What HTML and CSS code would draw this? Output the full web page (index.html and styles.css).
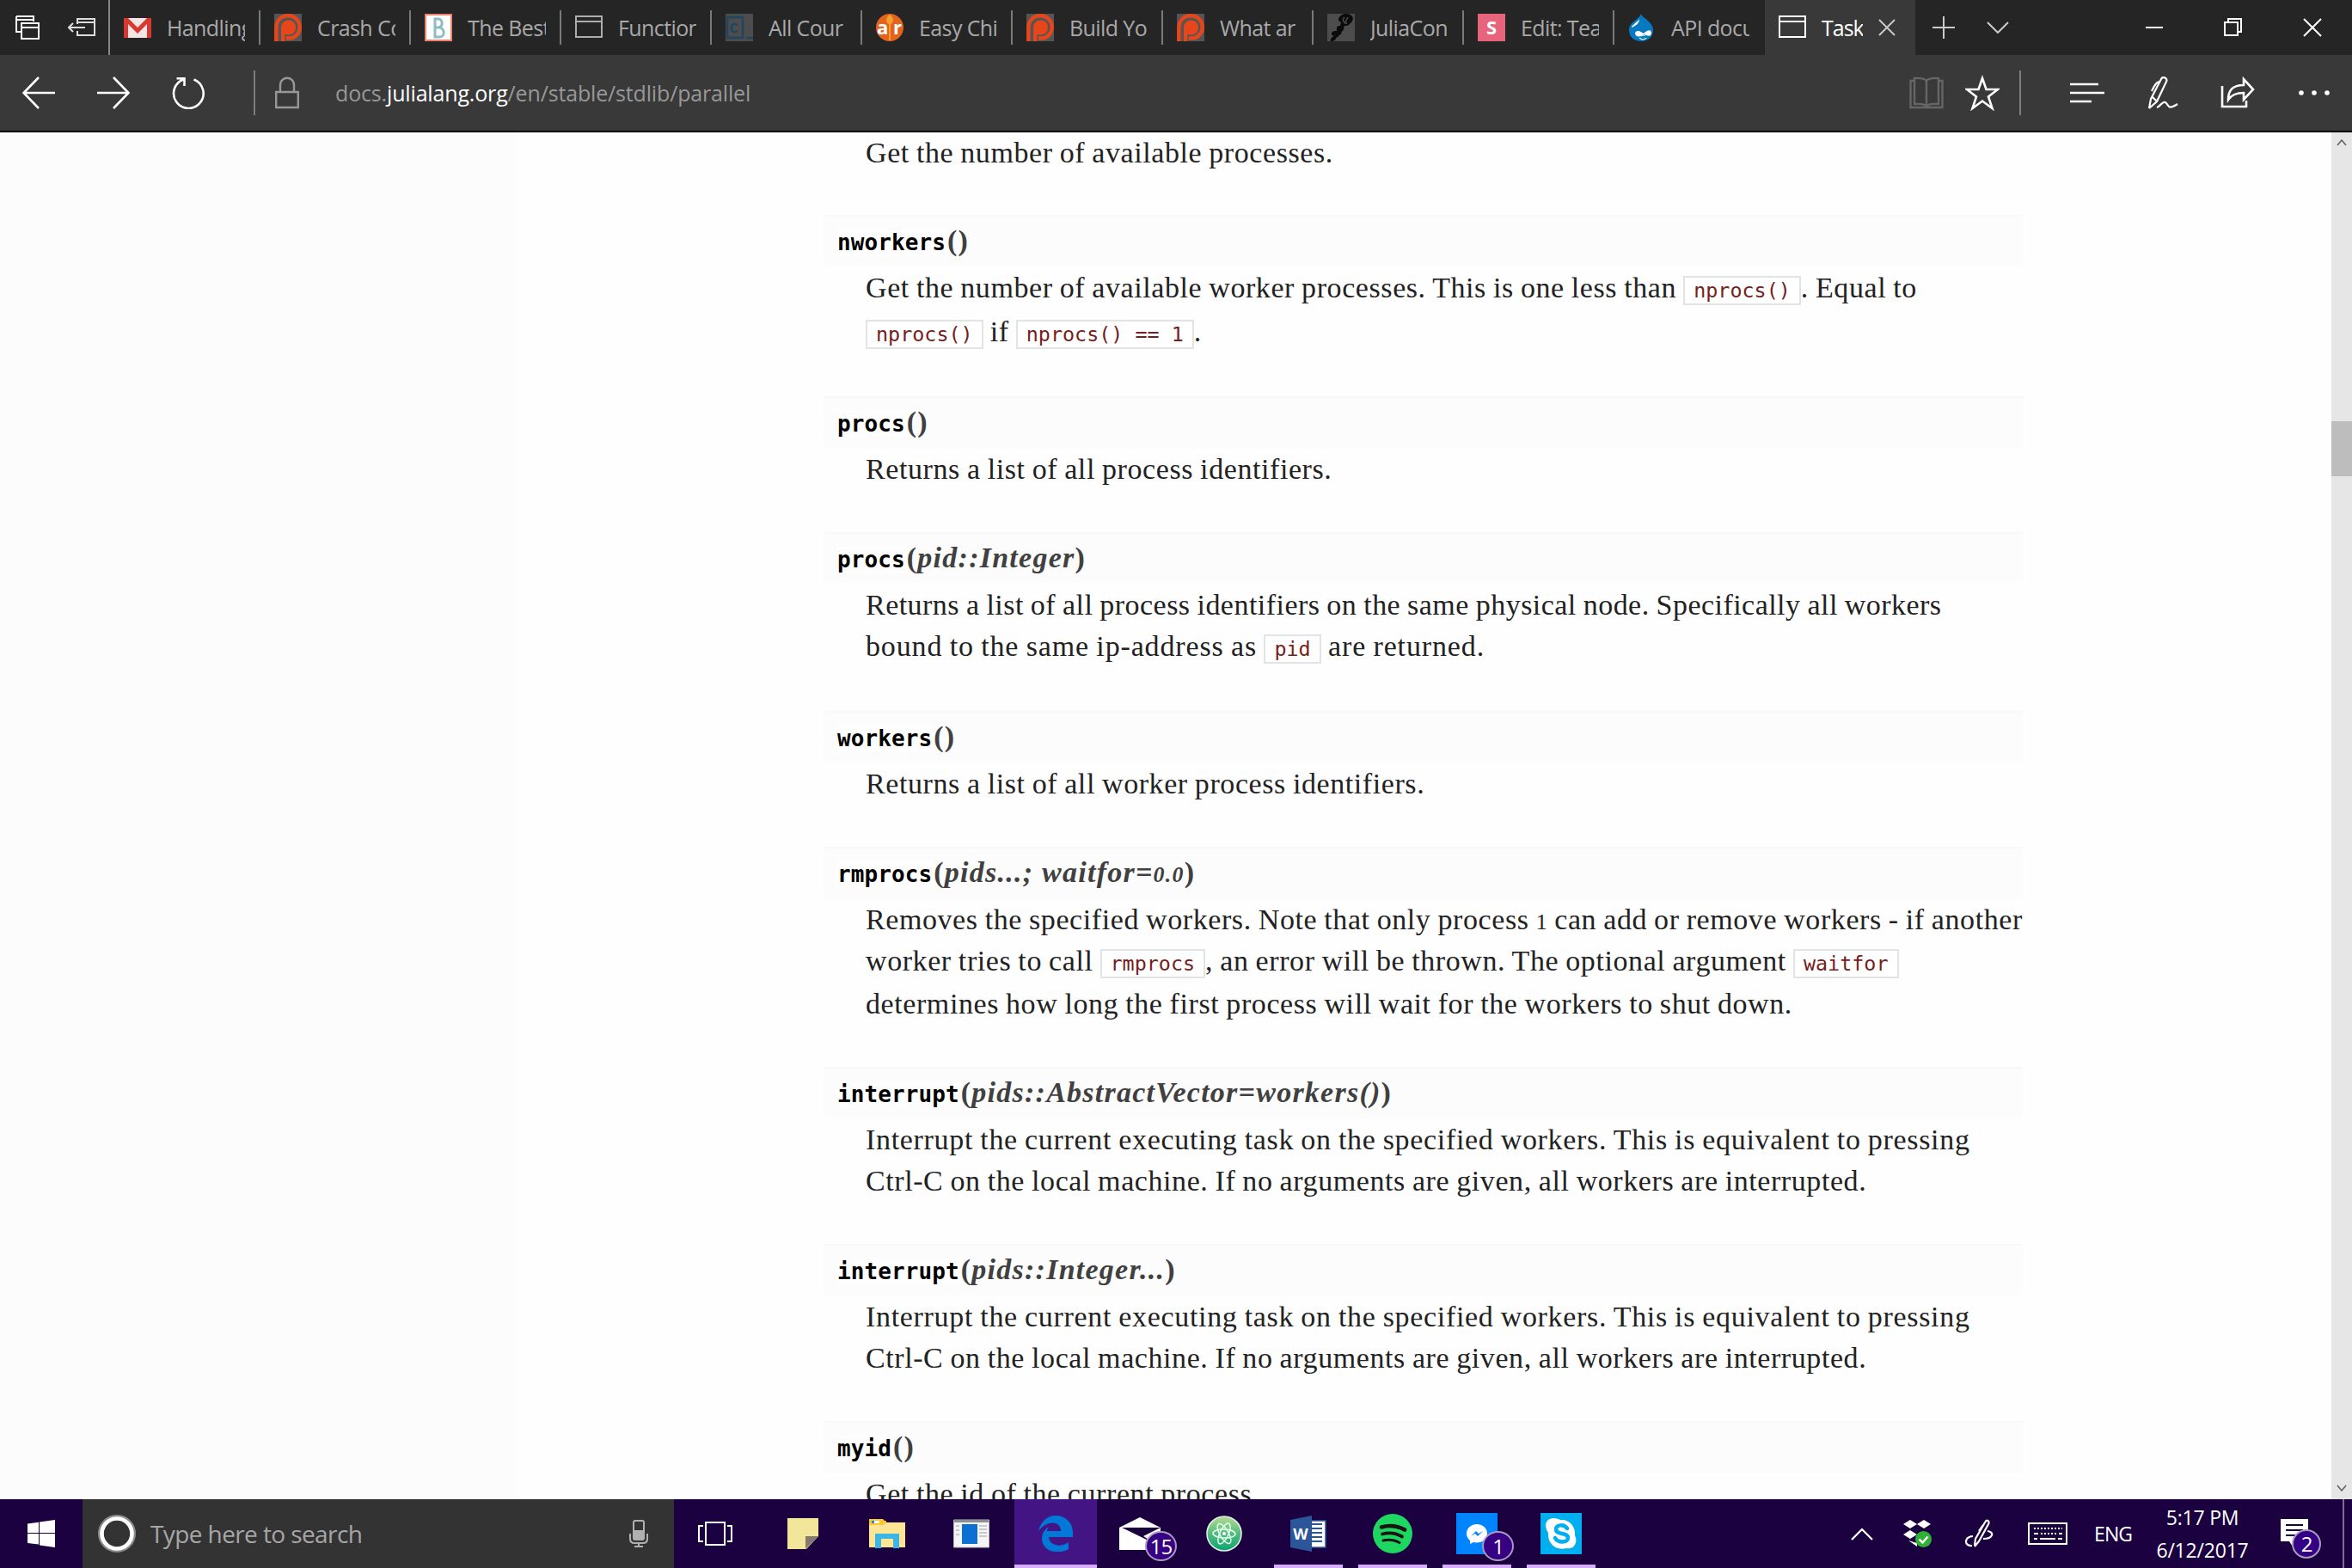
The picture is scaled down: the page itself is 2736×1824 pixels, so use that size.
FILE: index.html
```html
<!DOCTYPE html>
<html lang="en">
<head>
<meta charset="utf-8">
<title>Tasks and Parallel Computing</title>
<link rel="stylesheet" href="styles.css">
</head>
<body>
<svg width="0" height="0" class="defs"><symbol id="patreon" viewBox="0 0 32 32"><path fill="#555" d="M0 0h32v32H0z"/><path fill="none" stroke="#e6461a" stroke-width="4.500" d="M2.300 32V16.500C2.300 8 8 2.300 16 2.300S29.700 8 29.700 15.500 24 28.500 17 28.500h-3"/><path fill="#e6461a" d="M8 32V16.500C8 11 11.500 7.500 16.500 7.500S25 11 25 16s-3.500 8.500-8.500 8.500c-1.500 0-3-.300-4-1V32z"/></symbol></svg>
<div class="screen">
  <header class="tabbar">
    <div class="tab-tools">
      <svg width="28" height="28" viewBox="0 0 28 28" fill="none" stroke="#fff" stroke-width="2"><path d="M1 1h20v6M1 1v18h6M1 5h20M7 9h20v18H7zM7 14h20"/></svg>
      <svg width="32" height="22" viewBox="0 0 32 22" fill="none" stroke="#ddd" stroke-width="2"><path d="M11 7V1h20v19H11v-5M11 5h20M1 11h19M6 6l-5 5 5 5"/></svg>
    </div>
    <div class="tab"><svg width="32" height="32" viewBox="0 0 32 32"><path fill="#f4e6e5" d="M0 5h32v23H0z"/><path fill="#d93831" d="M0 28V5h5l11 11L27 5h5v23h-5V12L16 23 5 12v16z"/></svg><span class="t">Handling</span></div>
    <div class="tab"><svg width="32" height="32" viewBox="0 0 32 32"><use href="#patreon"/></svg><span class="t">Crash Co</span></div>
    <div class="tab"><svg width="32" height="32" viewBox="0 0 32 32"><path fill="#fff" stroke="#f28370" stroke-width="2" d="M1 1h30v30H1z"/><path fill="none" stroke="#8fbcc4" stroke-width="3" d="M12 6v21h5c7 0 7-10 0-11h-4 3c6-1 5-10 0-10z"/></svg><span class="t">The Best</span></div>
    <div class="tab"><svg width="32" height="32" viewBox="0 0 32 32"><path fill="none" stroke="#adadad" stroke-width="2" d="M1 3h30v24H1zM1 9h30"/></svg><span class="t">Function</span></div>
    <div class="tab"><svg width="32" height="32" viewBox="0 0 32 32"><path fill="#4d4d4d" d="M0 0h32v32H0z"/><path fill="none" stroke="#1f4560" stroke-width="2.500" d="M2 4h18v24H2zM24 28h8M14 13c-6-3-7 1-7 4s2 6 7 3"/></svg><span class="t">All Cour</span></div>
    <div class="tab"><svg width="32" height="32" viewBox="0 0 32 32"><circle cx="16" cy="16" r="16" fill="#e2641f"/><path fill="#f2a12c" d="M16 1c-6 4-4 10-1 11v19h2V12c3-1 5-7-1-11z"/><text class="fav-ar" x="1" y="24">a</text><text class="fav-ar" x="20" y="24">r</text></svg><span class="t">Easy Chi</span></div>
    <div class="tab"><svg width="32" height="32" viewBox="0 0 32 32"><use href="#patreon"/></svg><span class="t">Build Yo</span></div>
    <div class="tab"><svg width="32" height="32" viewBox="0 0 32 32"><use href="#patreon"/></svg><span class="t">What ar</span></div>
    <div class="tab"><svg width="32" height="32" viewBox="0 0 32 32"><path fill="#4d4d4d" d="M0 0h32v32H0z"/><path fill="#0b0b0b" d="M14 4c3-5 11-5 14-2 4 3 1 7-2 10-3 3-5 1-7 3 2 3-3 5-3 9-3 0-2 3-6 4 0 3-3 4-6 4-1-2 1-5 4-6-5-1-4-7 3-6 0-3-1-6 4-6l1-4c-3-1-4-4-2-6z"/><path fill="none" stroke="#4d4d4d" stroke-width="1.500" d="M20 4c-3 3-1 8 3 7M24 4l-3 6"/></svg><span class="t">JuliaCon</span></div>
    <div class="tab"><svg width="32" height="32" viewBox="0 0 32 32"><path fill="#e8637c" d="M0 0h32v32H0z"/><text class="fav-ar" x="16" y="24" text-anchor="middle">S</text></svg><span class="t">Edit: Tea</span></div>
    <div class="tab last"><svg width="32" height="32" viewBox="0 0 32 32"><path fill="#0779bf" d="M15 0c1 5 14 9 14 19 0 8-6 13-14 13S1 27 1 19C1 9 12 8 15 0z"/><path fill="#fff" d="M13 6C11 10 5 12 4 16c5-2 9-5 9-10zM8 22c3-4 7-1 10 1 3-3 8-6 9-1 0 5-4 4-8 2-4 3-11 4-11-2z"/><path fill="none" stroke="#cfe6f5" stroke-width="1.500" d="M13 28c3 3 7 2 8 0M15 26c2-2 4-1 4 0"/></svg><span class="t">API docu</span></div>
    <div class="tab active"><svg width="32" height="32" viewBox="0 0 32 32"><path fill="none" stroke="#fff" stroke-width="2" d="M1 3h30v24H1zM1 9h30"/></svg><span class="t">Task</span><svg class="tab-x" width="20" height="20" viewBox="0 0 20 20"><path fill="none" stroke="#ccc" stroke-width="1.800" d="M1 1l18 18M19 1L1 19"/></svg></div>
    <div class="newtab">
      <svg width="28" height="28" viewBox="0 0 28 28" fill="none" stroke="#ccc" stroke-width="2"><path d="M14 1v26M1 14h26"/></svg>
      <svg width="26" height="14" viewBox="0 0 26 14" fill="none" stroke="#ccc" stroke-width="2"><path d="M1 1l12 12L25 1"/></svg>
    </div>
    <div class="winbtns">
      <svg width="22" height="22" viewBox="0 0 22 22" fill="none" stroke="#fff" stroke-width="2"><path d="M1 11h20"/></svg>
      <svg width="22" height="22" viewBox="0 0 22 22" fill="none" stroke="#fff" stroke-width="2"><path d="M1 5h15v15H1zM5 5V1h15v15h-4"/></svg>
      <svg width="22" height="22" viewBox="0 0 22 22" fill="none" stroke="#fff" stroke-width="2"><path d="M1 1l20 20M21 1L1 21"/></svg>
    </div>
  </header>

  <nav class="toolbar">
    <div class="nav-left">
      <svg width="38" height="38" viewBox="0 0 38 38" fill="none" stroke="#fff" stroke-width="2.600"><path d="M1 19h37M19 1L1.500 19 19 37"/></svg>
      <svg width="38" height="38" viewBox="0 0 38 38" fill="none" stroke="#fff" stroke-width="2.600"><path d="M0 19h37M19 1l17.500 18L19 37"/></svg>
      <svg width="38" height="38" viewBox="0 0 38 38" fill="none" stroke="#fff" stroke-width="2.600"><path d="M14 3.200A17.300 17.300 0 1 0 25.500 3.500M5.500 2.300h9v8.700"/></svg>
    </div>
    <i class="rule"></i>
    <svg class="lock" width="28" height="38" viewBox="0 0 28 38" fill="none" stroke="#989898" stroke-width="2.400"><path d="M1.200 18h25.600v18H1.200zM6 18V10c0-11 16-11 16 0v8"/></svg>
    <div class="url">docs.<b>julialang.org</b>/en/stable/stdlib/parallel</div>
    <div class="nav-right">
      <svg width="40" height="38" viewBox="0 0 40 38" fill="none" stroke="#666" stroke-width="2.400"><path d="M20 4v30M20 5c-3-4-10-3-14-3v30c6 0 11-1 14 3 3-4 8-3 14-3V2c-4 0-11-1-14 3M6 5H1.500v31h37V5H34"/></svg>
      <svg class="star" width="40" height="42" viewBox="0 0 40 42" fill="none" stroke="#fff" stroke-width="2.600"><path d="M20 4l4.500 13H38L27 25.500 31.500 39 20 30.500 8.500 39 13 25.500 2 17h13.500z"/></svg>
      <i class="rule"></i>
      <svg class="hub" width="40" height="24" viewBox="0 0 40 24" fill="none" stroke="#fff" stroke-width="2.600"><path d="M0 2h33M0 12h40M0 22h25"/></svg>
      <svg class="ink" width="36" height="38" viewBox="0 0 36 38" fill="none" stroke="#fff" stroke-width="2.200"><path d="M1 37l2-11L15 3c2-4 8-1 6 3L10 29 1 37M5 24l4 4M13 6c-3 0-5 3-9 11M10 36c4-1 7-9 11-5 3 3 2 8 13 1"/></svg>
      <svg class="share" width="40" height="38" viewBox="0 0 40 38" fill="none" stroke="#fff" stroke-width="2.600"><path d="M2 11v24h28V28M9 27c0-11 5-17 18-17V3l11 12-11 12v-8c-9 0-14 2-18 8z"/></svg>
      <svg class="dots" width="38" height="8" viewBox="0 0 38 8" fill="#fff"><circle cx="4" cy="4" r="2.800"/><circle cx="19" cy="4" r="2.800"/><circle cx="34" cy="4" r="2.800"/></svg>
    </div>
  </nav>

  <main class="viewport">
    <aside class="side"></aside>
    <article class="doc">
      <section class="entry first">
        <p class="line">Get the number of available processes.</p>
      </section>
      <section class="entry h211">
        <h3><code>nworkers</code>()</h3>
        <p class="line">Get the number of available worker processes. This is one less than <code>nprocs()</code>. Equal to</p>
        <p class="line tall"><code>nprocs()</code> if <code>nprocs() == 1</code>.</p>
      </section>
      <section class="entry h158">
        <h3><code>procs</code>()</h3>
        <p class="line">Returns a list of all process identifiers.</p>
      </section>
      <section class="entry h208">
        <h3><code>procs</code>(<em>pid::Integer</em>)</h3>
        <p class="line snug">Returns a list of all process identifiers on the same physical node. Specifically all workers</p>
        <p class="line open">bound to the same ip-address as <code>pid</code> are returned.</p>
      </section>
      <section class="entry h158">
        <h3><code>workers</code>()</h3>
        <p class="line">Returns a list of all worker process identifiers.</p>
      </section>
      <section class="entry h256">
        <h3><code>rmprocs</code>(<em>pids...; waitfor=<span class="osf">0.0</span></em>)</h3>
        <p class="line">Removes the specified workers. Note that only process <span class="osf">1</span> can add or remove workers - if another</p>
        <p class="line">worker tries to call <code>rmprocs</code>, an error will be thrown. The optional argument <code>waitfor</code></p>
        <p class="line l50">determines how long the first process will wait for the workers to shut down.</p>
      </section>
      <section class="entry">
        <h3><code>interrupt</code>(<em>pids::AbstractVector=workers()</em>)</h3>
        <p class="line loose">Interrupt the current executing task on the specified workers. This is equivalent to pressing</p>
        <p class="line">Ctrl-C on the local machine. If no arguments are given, all workers are interrupted.</p>
      </section>
      <section class="entry">
        <h3><code>interrupt</code>(<em>pids::Integer...</em>)</h3>
        <p class="line loose">Interrupt the current executing task on the specified workers. This is equivalent to pressing</p>
        <p class="line">Ctrl-C on the local machine. If no arguments are given, all workers are interrupted.</p>
      </section>
      <section class="entry">
        <h3><code>myid</code>()</h3>
        <p class="line">Get the id of the current process.</p>
      </section>
    </article>
    <div class="scroll">
      <svg width="12" height="8" viewBox="0 0 12 8" fill="none" stroke="#606060" stroke-width="1.500"><path d="M1 7l5-6 5 6"/></svg>
      <i class="thumb"></i>
      <svg width="12" height="8" viewBox="0 0 12 8" fill="none" stroke="#606060" stroke-width="1.500"><path d="M1 1l5 6 5-6"/></svg>
    </div>
  </main>

  <footer class="taskbar">
    <div class="start"><svg width="32" height="32" viewBox="0 0 32 32" fill="#fff"><path d="M0 4.500L13 2.700V15H0zM14 2.500L32 0v15H14zM0 16h13v12.500L0 27zM14 16h18v16l-18-2.500z"/></svg></div>
    <div class="search">
      <svg width="44" height="44" viewBox="0 0 44 44" fill="none"><circle cx="22" cy="22" r="20.500" stroke="#8a8a8a" stroke-width="3"/><circle cx="22" cy="22" r="17.500" stroke="#fff" stroke-width="4.600"/></svg>
      <span class="hint">Type here to search</span>
      <svg width="22" height="32" viewBox="0 0 22 32" fill="none" stroke="#b0b0b0" stroke-width="2"><rect x="5" y="1" width="12" height="22" rx="2"/><path fill="#b0b0b0" d="M5 13h12v8l-2 2H7l-2-2z"/><path d="M1 16v6c0 3 2 5 5 5h10c3 0 5-2 5-5v-6M11 27v4M6 31h10"/></svg>
    </div>
    <div class="apps">
      <div class="app view"><svg width="40" height="28" viewBox="0 0 40 28" fill="none" stroke="#fff" stroke-width="2"><path d="M9 1h22v26H9zM6 5H1v18h5M34 5h5v18h-5"/></svg></div>
      <div class="app"><svg width="36" height="36" viewBox="0 0 36 36"><path fill="#f1e699" d="M0 0h36v21L22 36H0z"/><path fill="#87786f" d="M36 21H21v15z"/></svg></div>
      <div class="app"><svg width="42" height="36" viewBox="0 0 42 36"><path fill="#e8b339" d="M0 3h20v6H0z"/><path fill="#ffe694" d="M0 5h42v29H0z"/><path fill="#fdc52f" d="M0 1h16l4 4-4 3H0z"/><path fill="#fff" d="M3 3h9v3H3z"/><path fill="#2c8ed8" d="M3 3h3v3H3z"/><path fill="#3db5e6" d="M7 18h28v17h-7V24H14v11H7z"/></svg></div>
      <div class="app"><svg width="42" height="34" viewBox="0 0 42 34"><path fill="#f5f5f5" stroke="#b8b8b8" stroke-width="1" d="M.5 1h41v32H.5z"/><path fill="#8a8f94" d="M1 1h40v3H1z"/><path fill="#0b6fd4" d="M10 6h18v23H10z"/><path stroke="#bbb" stroke-width="1.500" d="M3 8h4M3 13h4M3 18h4M30 8h9M30 12h9M30 16h9M30 20h9"/></svg></div>
      <div class="app on focus"><svg width="40" height="42" viewBox="0 0 40 42"><path fill="#0078d7" d="M0 18C3 6 11 0 20 0c13 0 20 10 20 20v5H12c1 11 15 12 23 6v8c-12 7-30 3-31-11-.500-7 3-12 8-15-2 3-2 4-2 5h16C26 6 10 5 0 18z"/></svg></div>
      <div class="app"><svg width="48" height="38" viewBox="0 0 48 38"><path fill="#fff" d="M0 12L24 0l24 12v26H0z"/><path fill="#1b0140" d="M3 12h45L28 22l14 9z"/></svg><span class="badge">15</span></div>
      <div class="app"><svg width="44" height="44" viewBox="0 0 44 44"><defs><linearGradient id="ag" x2="0" y2="1"><stop offset="0" stop-color="#b5dc93"/><stop offset=".5" stop-color="#55bb7e"/><stop offset="1" stop-color="#0aa571"/></linearGradient></defs><circle cx="22" cy="22" r="20" fill="url(#ag)" stroke="#e3efe6" stroke-width="1.600"/><g fill="none" stroke="#e8fff2" stroke-width="1.500"><ellipse cx="22" cy="22" rx="5" ry="13" transform="rotate(25 22 22)"/><ellipse cx="22" cy="22" rx="5" ry="13" transform="rotate(-30 22 22)"/><ellipse cx="22" cy="22" rx="5" ry="13" transform="rotate(92 22 22)"/></g><circle cx="22" cy="22" r="2" fill="#fff"/></svg></div>
      <div class="app on"><svg width="42" height="42" viewBox="0 0 42 42"><path fill="#fff" stroke="#2b579a" stroke-width="1.500" d="M22 6h19v31H22z"/><path stroke="#2b579a" stroke-width="2" d="M24 10h13M24 15h13M24 20h13M24 25h13M24 30h13"/><path fill="#2b579a" d="M0 5l25-5v42L0 37z"/><text class="word-w" x="12" y="28" text-anchor="middle">W</text></svg></div>
      <div class="app on"><svg width="46" height="46" viewBox="0 0 46 46"><circle cx="23" cy="23" r="23" fill="#1ed760"/><g fill="none" stroke="#191414" stroke-linecap="round"><path stroke-width="4.600" d="M10 15.500c9-2.500 19-1.500 27 3"/><path stroke-width="3.800" d="M11 23.500c8-2 16-1 23 3"/><path stroke-width="3" d="M12 31c7-1.500 13-.800 19 2.500"/></g></svg></div>
      <div class="app on"><svg width="48" height="48" viewBox="0 0 48 48"><path fill="#0084ff" d="M0 0h48v48H0z"/><path fill="#fff" d="M24 13c-7 0-12 5-12 11 0 4 2 6 4 8v4l4-2c9 2 16-3 16-10 0-6-5-11-12-11z"/><path fill="#0084ff" d="M17 27l6-6 3 3 5-3-6 6-3-3z"/></svg><span class="badge">1</span></div>
      <div class="app on"><svg width="48" height="48" viewBox="0 0 48 48"><path fill="#00aff0" d="M0 0h48v48H0z"/><path fill="#fff" d="M15 6c4 0 6 1 8 2 10-1 18 7 17 18 4 8-1 17-10 15-12 3-22-5-21-18C3 14 7 6 15 6z"/><path fill="none" stroke="#00aff0" stroke-width="4.500" stroke-linecap="round" d="M31 18c-3-5-13-5-13 1 0 7 14 3 14 10 0 6-12 6-15 0"/></svg></div>
    </div>
    <div class="tray">
      <svg width="26" height="15" viewBox="0 0 26 15" fill="none" stroke="#fff" stroke-width="2.200"><path d="M1 14L13 2l12 12"/></svg>
      <svg class="dbx" width="34" height="34" viewBox="0 0 34 34"><path fill="#fff" d="M0 6l8-5 8 5-8 5zM16 6l8-5 8 5-8 5zM0 18l8-5 8 5-8 5zM6 25l10 3v4z"/><circle cx="23.500" cy="23.500" r="9.500" fill="#2eb135"/><path fill="none" stroke="#fff" stroke-width="2.400" d="M18.500 23.500l4 4 6-7"/></svg>
      <svg class="pen" width="34" height="34" viewBox="0 0 34 34" fill="none" stroke="#fff" stroke-width="2.200"><path d="M12 31l1-8L24 4c2-4 6-2 4 2L17 26l-5 6M17 14l5-7M10 20c-10 0-11 12-1 11M27 14c8 1 7 9-5 9"/></svg>
      <svg class="kbd" width="46" height="26" viewBox="0 0 46 26" fill="none" stroke="#fff" stroke-width="2"><path d="M1 1h44v24H1z"/><path stroke-dasharray="2 2" d="M7 7h33"/><path stroke-dasharray="5 3 2 2 2 2 2 2 2 2 2 3 8" d="M7 13h33"/><path d="M7 19h4M14 19h18M35 19h5"/></svg>
      <span class="lang">ENG</span>
      <div class="clock"><span>5:17 PM</span><span>6/12/2017</span></div>
      <div class="action"><svg width="32" height="34" viewBox="0 0 32 34"><path fill="#fff" d="M0 0h32v26H20l-6 6-4-6H0z"/><path stroke="#1b0140" stroke-width="2" d="M6 7h20M6 13h20M6 19h12"/></svg><span class="badge two">2</span></div>
      <i class="peek"></i>
    </div>
  </footer>
</div>
</body>
</html>
```
FILE: styles.css
```css
* { box-sizing: border-box; }
html, body { margin: 0; padding: 0; }
body { width: 2736px; height: 1824px; overflow: hidden; background: #fefefe; }
b { font-weight: inherit; }
svg { display: block; flex: none; }
.defs { position: absolute; }

.screen { display: flex; flex-direction: column; width: 2736px; height: 1824px; font-family: "Open Sans", "Noto Sans", sans-serif; }

/* tab strip */
.tabbar { display: flex; height: 64px; background: #252525; flex: none; }
.tab-tools { display: flex; align-items: center; width: 128px; padding-left: 18px; gap: 33px; border-right: 2px solid #888; flex: none; }
.tab { display: flex; align-items: center; width: 175px; padding-left: 16px; gap: 18px; flex: none; background: linear-gradient(#7a7a7a, #7a7a7a) right center / 2px 40px no-repeat; }
.tab .t { width: 91px; overflow: hidden; white-space: nowrap; font-size: 25px; letter-spacing: -0.6px; line-height: 40px; color: #a9a9a9; }
.tab.last { background: none; }
.tab.active { background: #393939; }
.tab.active .t { width: 48px; color: #fff; letter-spacing: -1px; }
.tab-x { margin-left: 0; }
.newtab { display: flex; align-items: center; gap: 36px; padding-left: 19px; }
.winbtns { display: flex; align-items: center; gap: 70px; margin-left: auto; padding-right: 35px; }
.fav-ar { font: bold 22px "Open Sans", sans-serif; fill: #fff; }

/* address bar */
.toolbar { display: flex; align-items: center; height: 90px; background: #393939; border-bottom: 2px solid #000; flex: none; }
.nav-left { display: flex; gap: 49px; padding-left: 26px; }
.rule { display: block; width: 2px; height: 52px; background: #7d7d7d; }
.nav-left + .rule { margin-left: 57px; }
.lock { margin-left: 23px; }
.url { margin-left: 42px; font-size: 25px; letter-spacing: -0.16px; line-height: 40px; color: #989898; }
.url b { color: #fff; }
.nav-right { display: flex; align-items: center; margin-left: auto; padding-right: 25px; }
.star { margin: 0 23px 0 25px; }
.hub { margin-left: 57px; }
.ink { margin-left: 51px; }
.share { margin-left: 48px; }
.dots { margin-left: 50px; }

/* document */
.viewport { display: flex; height: 1590px; overflow: hidden; flex: none; background: #fefefe; }
.side { width: 600px; background: #fcfcfc; flex: none; }
.doc { width: 1394px; margin-left: 359px; font: 34px/48px "Liberation Serif", serif; color: #222; }
.entry { height: 206px; }
.first { height: 96px; }
.h211 { height: 211px; }
.h158 { height: 158px; }
.h208 { height: 208px; }
.h256 { height: 256px; }
.entry h3 { margin: 0 0 1px; height: 60px; padding: 1px 0 0 15px; border-top: 2px solid #f8f8f8; background: #fcfcfc; font-size: 34px; line-height: 54px; letter-spacing: 1.25px; color: #404040; white-space: nowrap; }
.entry h3 code { font: bold 26px/36px "DejaVu Sans Mono", monospace; letter-spacing: 0.1px; color: #000; padding-right: 2px; background: #fefefe; }
.line { margin: 0; padding-left: 48px; height: 48px; white-space: nowrap; letter-spacing: 0.58px; word-spacing: -1px; }
.snug { letter-spacing: 0.46px; }
.loose { letter-spacing: 0.68px; }
.open { letter-spacing: 0.86px; }
.line code { display: inline-block; height: 34px; padding: 0 10px; border: 2px solid #e1e4e5; background: #fff; font: 23.4px/30px "DejaVu Sans Mono", monospace; letter-spacing: 0; word-spacing: 0; color: #752020; }
.osf { font-size: 0.76em; }
.tall { height: 51px; padding-top: 3px; }
.l50 { padding-top: 2px; }
.scroll { display: flex; flex-direction: column; align-items: center; width: 24px; margin-left: auto; padding: 8px 0 9px; background: #e6e6e6; }
.thumb { width: 24px; height: 64px; margin: 320px 0 auto; background: #bdbdbd; }

/* taskbar */
.taskbar { display: flex; height: 80px; background: #1b0140; color: #fff; flex: none; }
.start { display: flex; align-items: center; justify-content: center; width: 96px; }
.search { display: flex; align-items: center; width: 688px; padding: 0 30px 0 18px; background: #333; }
.hint { flex: 1; padding-left: 17px; font-size: 28px; letter-spacing: -0.6px; line-height: 40px; color: #a6a6a6; }
.apps { display: flex; gap: 2px; }
.app { position: relative; display: flex; align-items: center; justify-content: center; width: 96px; height: 80px; }
.view { width: 100px; padding-right: 4px; }
.on { background: linear-gradient(#d6adff, #d6adff) center bottom / 80px 4px no-repeat; }
.focus { background: linear-gradient(#d6adff, #d6adff) center bottom / 96px 4px no-repeat #421484; }
.word-w { font: bold 18px "Open Sans", sans-serif; fill: #fff; }
.badge { position: absolute; left: 54px; top: 37px; width: 37px; height: 35px; border: 2px solid #a99ac0; border-radius: 50%; background: #350083; font-size: 24px; line-height: 31px; text-align: center; color: #fff; letter-spacing: -1px; }
.tray { display: flex; align-items: center; margin-left: auto; }
.dbx { margin-left: 35px; }
.pen { margin-left: 37px; }
.kbd { margin-left: 40px; }
.lang { margin-left: 31px; width: 44px; font-size: 23px; letter-spacing: -0.9px; }
.clock { display: flex; flex-direction: column; align-items: center; width: 120px; margin-left: 22px; font-size: 23px; letter-spacing: -0.2px; line-height: 38px; }
.action { position: relative; margin-left: 31px; }
.two { left: 13px; top: 12px; width: 34px; height: 34px; line-height: 30px; }
.peek { width: 2px; height: 80px; margin: 0 9px 0 40px; background: #7a6c93; }
```
